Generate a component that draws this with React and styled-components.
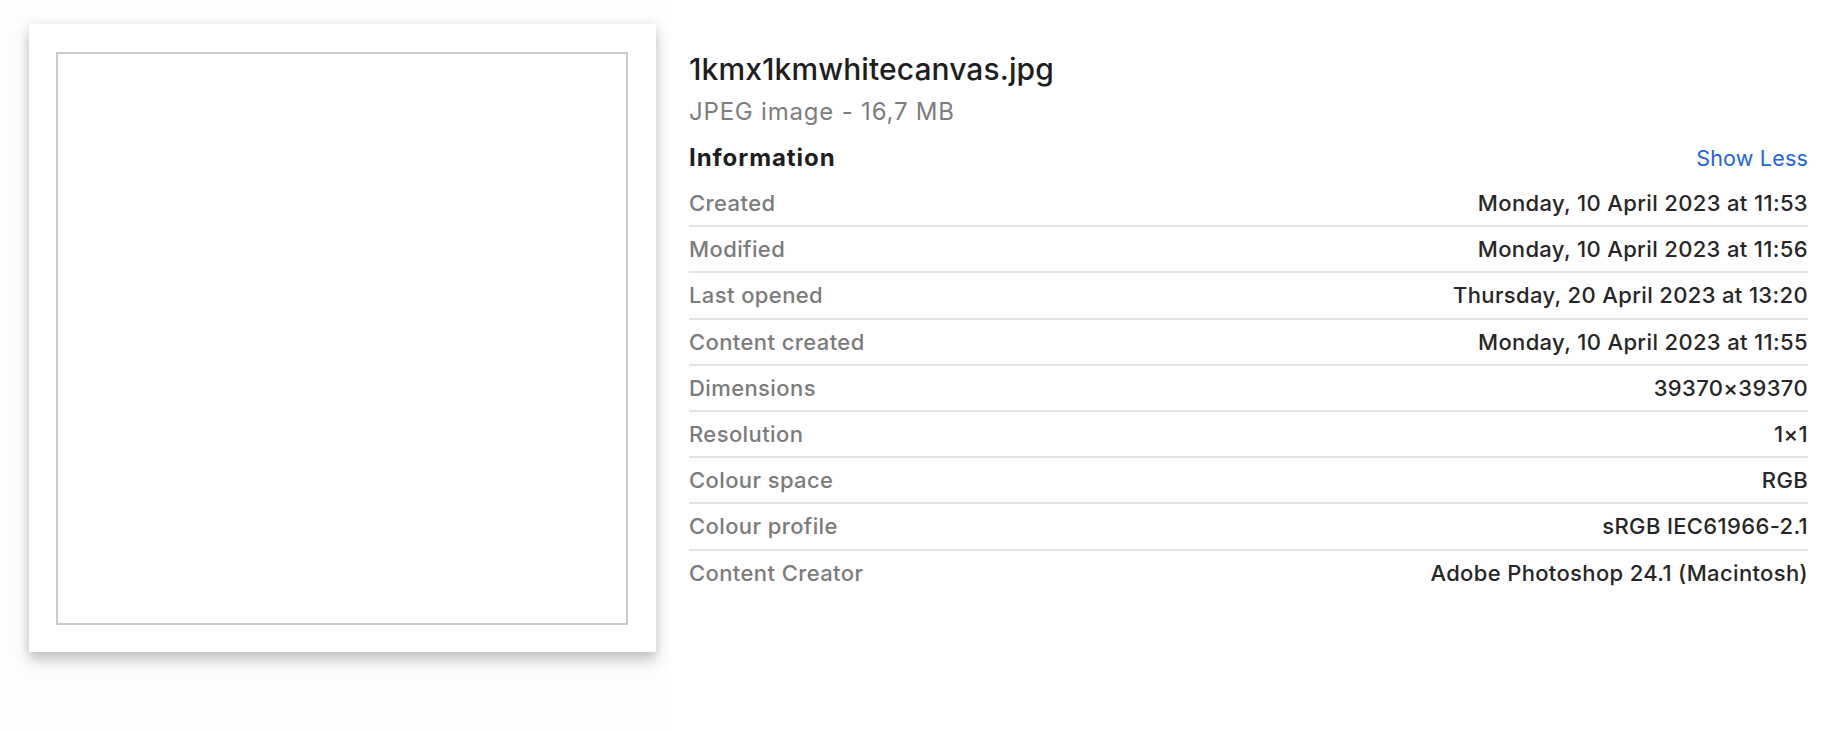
import React from 'react';
import styled, { createGlobalStyle } from 'styled-components';

const GlobalStyle = createGlobalStyle`
  html, body {
    margin: 0;
    padding: 0;
    background: #ffffff;
  }
  body {
    font-family: Inter, "Noto Sans", "Liberation Sans", sans-serif;
    -webkit-font-smoothing: antialiased;
  }
`;

const Window = styled.div`
  display: flex;
  flex-direction: row;
  width: 1844px;
  height: 730px;
  background: #ffffff;
  overflow: hidden;
`;

const PreviewPane = styled.div`
  width: 670px;
  flex-shrink: 0;
  background: #fdfdfd;
  box-sizing: border-box;
  padding: 24px 0 0 29px;
`;

const Card = styled.div`
  width: 627px;
  height: 628px;
  box-sizing: border-box;
  background: #ffffff;
  padding: 28px 28px 27px 27px;
  box-shadow: 0 8px 13px rgba(0, 0, 0, 0.22), 0 0 10px rgba(0, 0, 0, 0.07);
`;

const Canvas = styled.div`
  width: 100%;
  height: 100%;
  box-sizing: border-box;
  border: 2px solid #cbcbcb;
  background: #ffffff;
`;

const InfoPane = styled.div`
  flex: 1;
  display: flex;
  flex-direction: column;
  padding: 51px 36px 0 19px;
`;

const FileName = styled.div`
  font-size: 30px;
  line-height: 36px;
  font-weight: 500;
  color: #1e1e1e;
  letter-spacing: 0.1px;
`;

const FileKind = styled.div`
  margin-top: 10px;
  font-size: 24px;
  line-height: 30px;
  font-weight: 400;
  color: #7d7d7d;
  letter-spacing: 0.8px;
`;

const SectionHead = styled.div`
  display: flex;
  align-items: baseline;
  justify-content: space-between;
  margin-top: 16px;
  height: 30px;
`;

const SectionTitle = styled.div`
  font-size: 24px;
  line-height: 30px;
  font-weight: 700;
  color: #1e1e1e;
  letter-spacing: 0.95px;
`;

const Toggle = styled.span`
  font-size: 21.5px;
  line-height: 30px;
  font-weight: 400;
  color: #1f63de;
  letter-spacing: 0.2px;
  cursor: pointer;
`;

const Rows = styled.div`
  display: flex;
  flex-direction: column;
  margin-top: 8px;
`;

const Row = styled.div`
  display: flex;
  align-items: center;
  justify-content: space-between;
  height: 44.2px;
  border-bottom: 2px solid ${(p) => (p.$last ? 'transparent' : '#e3e3e3')};
`;

const Label = styled.span`
  font-size: 22px;
  font-weight: 500;
  color: #7b7b7b;
  letter-spacing: 0.4px;
`;

const Value = styled.span`
  font-size: 22px;
  font-weight: 500;
  color: #262626;
  letter-spacing: 0.35px;
`;

const rows = [
  ['Created', 'Monday, 10 April 2023 at 11:53'],
  ['Modified', 'Monday, 10 April 2023 at 11:56'],
  ['Last opened', 'Thursday, 20 April 2023 at 13:20'],
  ['Content created', 'Monday, 10 April 2023 at 11:55'],
  ['Dimensions', '39370×39370'],
  ['Resolution', '1×1'],
  ['Colour space', 'RGB'],
  ['Colour profile', 'sRGB IEC61966-2.1'],
  ['Content Creator', 'Adobe Photoshop 24.1 (Macintosh)'],
];

export default function App() {
  return (
    <>
      <GlobalStyle />
      <Window>
        <PreviewPane>
          <Card>
            <Canvas />
          </Card>
        </PreviewPane>
        <InfoPane>
          <FileName>1kmx1kmwhitecanvas.jpg</FileName>
          <FileKind>JPEG image - 16,7 MB</FileKind>
          <SectionHead>
            <SectionTitle>Information</SectionTitle>
            <Toggle>Show Less</Toggle>
          </SectionHead>
          <Rows>
            {rows.map(([label, value], i) => (
              <Row key={label} $last={i === rows.length - 1}>
                <Label>{label}</Label>
                <Value>{value}</Value>
              </Row>
            ))}
          </Rows>
        </InfoPane>
      </Window>
    </>
  );
}
